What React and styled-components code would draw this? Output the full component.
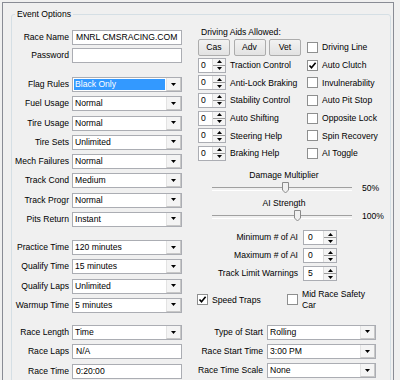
import React from 'react';
import styled, { createGlobalStyle } from 'styled-components';

const GlobalStyle = createGlobalStyle`
  html, body { margin: 0; padding: 0; background: #f0f0f0; }
  body {
    font-family: "Liberation Sans", Arial, sans-serif;
    font-size: 8.6px;
    color: #000;
  }
  * { box-sizing: border-box; }
`;

const Screen = styled.div`
  width: 400px;
  height: 380px;
  overflow: hidden;
  background: #f0f0f0;
  padding: 2px 0 0 2px;
`;

const TabPage = styled.div`
  width: 392px;
  height: 400px;
  border: 1px solid #898c95;
  border-bottom: none;
  background: #f0f0f0;
  padding: 11px 2px 0 8px;
`;

const GroupBox = styled.div`
  position: relative;
  height: 400px;
  border: 1px solid #d5dfe5;
  border-radius: 3px;
  display: grid;
  grid-template-columns: 170px 192px;
  column-gap: 15px;
`;

const GroupTitle = styled.span`
  position: absolute;
  top: -7px;
  left: 3px;
  padding: 0 2px;
  line-height: 12px;
  background: #f0f0f0;
`;

const Column = styled.div`
  display: flex;
  flex-direction: column;
`;

const FieldGroup = styled.div`
  display: flex;
  flex-direction: column;
  gap: ${p => p.$gap}px;
  margin-top: ${p => p.$mt}px;
`;

const FieldRow = styled.div`
  display: grid;
  grid-template-columns: ${p => p.$label}px ${p => p.$control}px;
  column-gap: ${p => p.$gap}px;
  align-items: center;
  height: 15px;
`;

const FieldLabel = styled.span`
  text-align: right;
  white-space: nowrap;
  line-height: 11px;
`;

const TextBox = styled.div`
  height: 15px;
  border: 1px solid #abadb3;
  background: #fff;
  padding: 0 3px;
  line-height: 13px;
  white-space: nowrap;
  overflow: hidden;
`;

const Combo = styled.div`
  display: flex;
  height: 15px;
  border: 1px solid #abadb3;
  background: #fff;
`;

const ComboValue = styled.span`
  flex: 1;
  margin: 1px;
  padding-left: 1px;
  line-height: 11px;
  white-space: nowrap;
  overflow: hidden;
  background: ${p => (p.$selected ? '#3399ff' : 'transparent')};
  color: ${p => (p.$selected ? '#fff' : '#000')};
`;

const ComboButton = styled.span`
  width: 15px;
  display: flex;
  align-items: center;
  justify-content: center;
  background: #f4f4f4;
  border-left: 1px solid #e3e3e3;
  border-right: 1px solid #c8c8c8;
  border-bottom: 1px solid #c8c8c8;
`;

const AidsTitle = styled.div`
  margin-top: 11px;
  padding-left: 4px;
  line-height: 12px;
`;

const AidsGrid = styled.div`
  display: grid;
  grid-template-columns: 109px auto;
  grid-auto-rows: 17.7px;
  margin-top: 0.5px;
  padding-left: 1px;
  align-items: center;
`;

const ButtonBar = styled.div`
  display: flex;
  gap: 3.5px;
`;

const AidButton = styled.button`
  width: 32px;
  height: 17px;
  padding: 0;
  font: inherit;
  color: #000;
  border: 1px solid #acacac;
  border-radius: 2px;
  background: linear-gradient(#f2f2f2, #e2e2e2);
`;

const SpinLine = styled.div`
  display: flex;
  align-items: center;
  gap: 4px;
  white-space: nowrap;
`;

const Spin = styled.div`
  display: flex;
  width: ${p => p.$w}px;
  height: 15px;
  border: 1px solid #abadb3;
  background: #fff;
`;

const SpinValue = styled.span`
  flex: 1;
  padding-left: ${p => p.$pad}px;
  line-height: 13px;
`;

const SpinButtons = styled.span`
  width: 13px;
  display: flex;
  flex-direction: column;
  background: #f4f4f4;
  border-left: 1px solid #dcdcdc;
`;

const SpinHalf = styled.span`
  flex: 1;
  display: flex;
  align-items: center;
  justify-content: center;
  border-top: ${p => (p.$lower ? '1px solid #9a9a9a' : 'none')};
`;

const CheckLine = styled.label`
  display: flex;
  align-items: center;
  gap: 4px;
  white-space: nowrap;
  width: ${p => (p.$w ? `${p.$w}px` : 'auto')};
`;

const CheckBox = styled.span`
  width: 11px;
  height: 11px;
  flex: none;
  border: 1px solid #8e8f8f;
  background: #fff;
  display: flex;
  align-items: center;
  justify-content: center;
`;

const WrapText = styled.span`
  white-space: normal;
  width: 70px;
  line-height: 11px;
`;

const SliderBlock = styled.div`
  display: grid;
  grid-template-columns: 15px 140px auto;
  grid-template-rows: 12px 14px;
  margin-top: ${p => p.$mt}px;
`;

const SliderLabel = styled.span`
  grid-column: 2;
  grid-row: 1;
  text-align: center;
  padding-left: 4px;
  line-height: 12px;
  white-space: nowrap;
`;

const Track = styled.div`
  grid-column: 2;
  grid-row: 2;
  position: relative;
  &::before {
    content: '';
    position: absolute;
    left: 0;
    right: 0;
    top: 6px;
    height: 2px;
    border-top: 1px solid #a0a0a0;
    border-bottom: 1px solid #ffffff;
  }
`;

const Thumb = styled.svg`
  position: absolute;
  top: 1px;
  margin-left: -3px;
`;

const Percent = styled.span`
  grid-column: 3;
  grid-row: 2;
  padding-left: 10px;
  line-height: 14px;
`;

const ChecksRow = styled.div`
  display: flex;
  align-items: center;
  height: 22px;
  margin-top: 7.5px;
`;

const DownArrow = () => (
  <svg width="5" height="3" viewBox="0 0 5 3">
    <path d="M0 0H5L2.5 3Z" fill="#000" />
  </svg>
);

const UpArrow = () => (
  <svg width="5" height="3" viewBox="0 0 5 3">
    <path d="M0 3H5L2.5 0Z" fill="#000" />
  </svg>
);

const CheckMark = () => (
  <svg width="9" height="9" viewBox="0 0 9 9">
    <path d="M1.5 4.5L3.5 6.8L7.6 1.8" fill="none" stroke="#000" strokeWidth="1.6" />
  </svg>
);

const ComboBox = ({ value, selected }) => (
  <Combo>
    <ComboValue $selected={selected}>{value}</ComboValue>
    <ComboButton>
      <DownArrow />
    </ComboButton>
  </Combo>
);

const Spinner = ({ value, width, pad }) => (
  <Spin $w={width}>
    <SpinValue $pad={pad}>{value}</SpinValue>
    <SpinButtons>
      <SpinHalf>
        <UpArrow />
      </SpinHalf>
      <SpinHalf $lower>
        <DownArrow />
      </SpinHalf>
    </SpinButtons>
  </Spin>
);

const Check = ({ label, checked, width, wrap }) => (
  <CheckLine $w={width}>
    <CheckBox>{checked && <CheckMark />}</CheckBox>
    {wrap ? <WrapText>{label}</WrapText> : <span>{label}</span>}
  </CheckLine>
);

const Slider = ({ label, pos, percent, mt }) => (
  <SliderBlock $mt={mt}>
    <SliderLabel>{label}</SliderLabel>
    <Track>
      <Thumb width="7" height="12" viewBox="0 0 7 12" style={{ left: `${pos}px` }}>
        <path d="M0.5 0.5H6.5V8L3.5 11L0.5 8Z" fill="#f0f0f0" stroke="#8a8a8a" />
      </Thumb>
    </Track>
    <Percent>{percent}</Percent>
  </SliderBlock>
);

const leftGroups = [
  {
    mt: 15,
    gap: 3,
    rows: [
      { label: 'Race Name', text: 'MNRL CMSRACING.COM' },
      { label: 'Password', text: '' },
    ],
  },
  {
    mt: 14,
    gap: 4.25,
    rows: [
      { label: 'Flag Rules', combo: 'Black Only', selected: true },
      { label: 'Fuel Usage', combo: 'Normal' },
      { label: 'Tire Usage', combo: 'Normal' },
      { label: 'Tire Sets', combo: 'Unlimited' },
      { label: 'Mech Failures', combo: 'Normal' },
      { label: 'Track Cond', combo: 'Medium' },
      { label: 'Track Progr', combo: 'Normal' },
      { label: 'Pits Return', combo: 'Instant' },
    ],
  },
  {
    mt: 13.25,
    gap: 4.25,
    rows: [
      { label: 'Practice Time', combo: '120 minutes' },
      { label: 'Qualify Time', combo: '15 minutes' },
      { label: 'Qualify Laps', combo: 'Unlimited' },
      { label: 'Warmup Time', combo: '5 minutes' },
    ],
  },
  {
    mt: 12.25,
    gap: 4.25,
    rows: [
      { label: 'Race Length', combo: 'Time' },
      { label: 'Race Laps', text: 'N/A' },
      { label: 'Race Time', text: '0:20:00' },
    ],
  },
];

const aids = [
  { spin: 'Traction Control', check: 'Auto Clutch', checked: true },
  { spin: 'Anti-Lock Braking', check: 'Invulnerability' },
  { spin: 'Stability Control', check: 'Auto Pit Stop' },
  { spin: 'Auto Shifting', check: 'Opposite Lock' },
  { spin: 'Steering Help', check: 'Spin Recovery' },
  { spin: 'Braking Help', check: 'AI Toggle' },
];

const aiSpins = [
  { label: 'Minimum # of AI', value: '0' },
  { label: 'Maximum # of AI', value: '0' },
  { label: 'Track Limit Warnings', value: '5' },
];

const startRows = [
  { label: 'Type of Start', value: 'Rolling' },
  { label: 'Race Start Time', value: '3:00 PM' },
  { label: 'Race Time Scale', value: 'None' },
];

export default function App() {
  return (
    <>
      <GlobalStyle />
      <Screen>
        <TabPage>
          <GroupBox>
            <GroupTitle>Event Options</GroupTitle>
            <Column>
              {leftGroups.map((g, gi) => (
                <FieldGroup key={gi} $mt={g.mt} $gap={g.gap}>
                  {g.rows.map(r => (
                    <FieldRow key={r.label} $label={57} $control={110} $gap={3}>
                      <FieldLabel>{r.label}</FieldLabel>
                      {r.combo !== undefined ? (
                        <ComboBox value={r.combo} selected={r.selected} />
                      ) : (
                        <TextBox>{r.text}</TextBox>
                      )}
                    </FieldRow>
                  ))}
                </FieldGroup>
              ))}
            </Column>
            <Column>
              <AidsTitle>Driving Aids Allowed:</AidsTitle>
              <AidsGrid>
                <ButtonBar>
                  <AidButton>Cas</AidButton>
                  <AidButton>Adv</AidButton>
                  <AidButton>Vet</AidButton>
                </ButtonBar>
                <Check label="Driving Line" />
                {aids.map(a => (
                  <React.Fragment key={a.spin}>
                    <SpinLine>
                      <Spinner value="0" width={28} pad={2} />
                      <span>{a.spin}</span>
                    </SpinLine>
                    <Check label={a.check} checked={a.checked} />
                  </React.Fragment>
                ))}
              </AidsGrid>
              <Slider label="Damage Multiplier" pos={73} percent="50%" mt={6.6} />
              <Slider label="AI Strength" pos={85} percent="100%" mt={2} />
              <FieldGroup $mt={7.5} $gap={3}>
                {aiSpins.map(s => (
                  <FieldRow key={s.label} $label={101} $control={34} $gap={5}>
                    <FieldLabel>{s.label}</FieldLabel>
                    <Spinner value={s.value} width={34} pad={4} />
                  </FieldRow>
                ))}
              </FieldGroup>
              <ChecksRow>
                <Check label="Speed Traps" checked width={90} />
                <Check label="Mid Race Safety Car" wrap />
              </ChecksRow>
              <FieldGroup $mt={14} $gap={4.25}>
                {startRows.map(r => (
                  <FieldRow key={r.label} $label={66} $control={109} $gap={4}>
                    <FieldLabel>{r.label}</FieldLabel>
                    <ComboBox value={r.value} />
                  </FieldRow>
                ))}
              </FieldGroup>
            </Column>
          </GroupBox>
        </TabPage>
      </Screen>
    </>
  );
}
